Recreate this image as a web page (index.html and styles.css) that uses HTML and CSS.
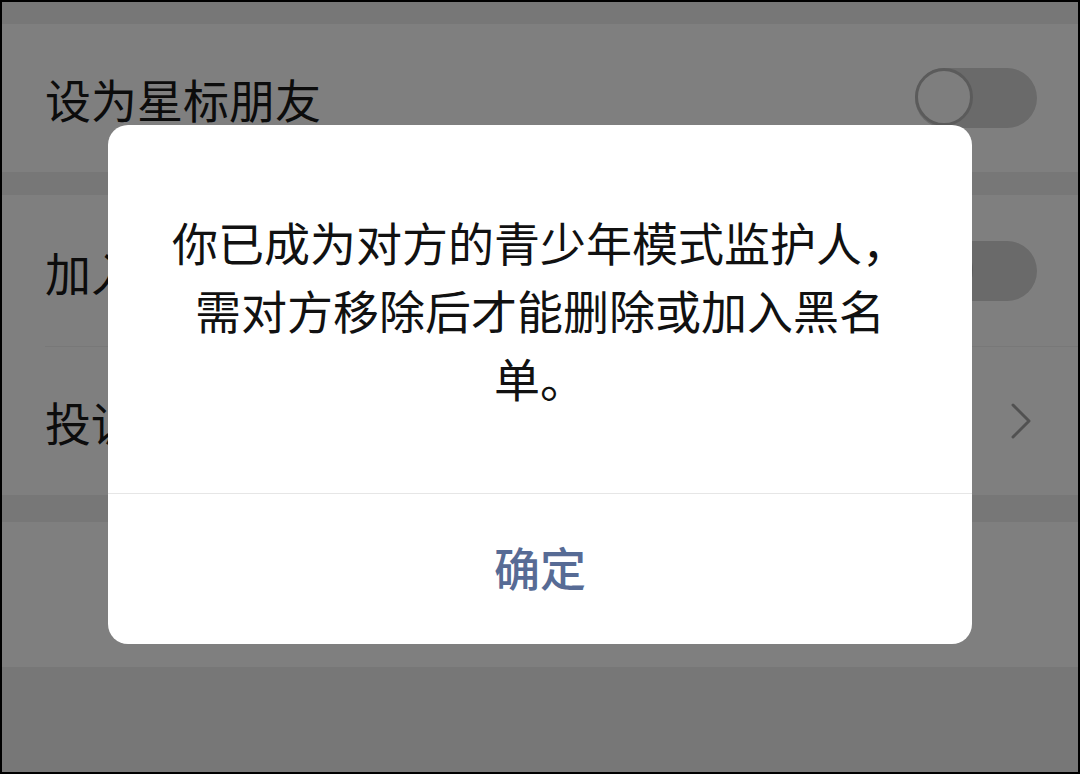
FILE: index.html
```html
<!DOCTYPE html>
<html>
	<head>
		<meta charset="utf-8">
		<title>资料设置</title>
		<link rel="stylesheet" href="styles.css">
	</head>
	<body>
		<div class="screen">
			<div class="gap gap-top"></div>
			<div class="cell">
				<span>设为星标朋友</span>
				<div class="switch"><i></i></div>
			</div>
			<div class="gap"></div>
			<div class="cell cell-tall line">
				<span>加入黑名单</span>
				<div class="switch"><i></i></div>
			</div>
			<div class="cell">
				<span>投诉</span>
				<svg class="arrow" width="22" height="38" viewBox="0 0 22 38">
					<polyline points="3,3 19,19 3,35" fill="none" stroke="#a2a2a2" stroke-width="3" stroke-linecap="round" stroke-linejoin="round"/>
				</svg>
			</div>
			<div class="gap gap-wide"></div>
			<div class="cell cell-btn">
				<span class="danger">删除</span>
			</div>

			<div class="mask">
				<div class="dialog">
					<p class="dialog-text">你已成为对方的青少年模式监护人，需对方移除后才能删除或加入黑名单。</p>
					<div class="dialog-btn">确定</div>
				</div>
			</div>
		</div>
	</body>
</html>
```

FILE: styles.css
```css
*{
	box-sizing: border-box;
}
body{
	margin: 0;
	font-family: "Noto Sans CJK SC", "Noto Sans", sans-serif;
}
.screen{
	width: 1080px;
	height: 774px;
	border: 2px solid #000;
	background: #eeeeee;
	position: relative;
	overflow: hidden;
}
.gap{
	height: 23px;
}
.gap-top{
	height: 22px;
}
.gap-wide{
	height: 27px;
}
.cell{
	height: 148px;
	background: #fff;
	display: flex;
	align-items: center;
	justify-content: space-between;
	padding: 0 41px 0 43px;
	font-size: 46px;
	color: #181818;
	position: relative;
}
.cell-tall{
	height: 152px;
}
.line:after{
	content: '';
	position: absolute;
	left: 43px;
	right: 0;
	bottom: 0;
	height: 1px;
	background: #f1f1f1;
}
.cell-btn{
	height: 145px;
	justify-content: center;
}
.danger{
	color: #fa5151;
}
.arrow{
	margin-right: 5px;
}
.switch{
	width: 122px;
	height: 60px;
	border-radius: 30px;
	background: #d4d4d4;
	padding: 1px;
}
.switch i{
	display: block;
	width: 58px;
	height: 58px;
	border-radius: 50%;
	background: #fcfcfc;
	border: 3px solid #b6b6b6;
	margin-top: -1px;
	margin-left: -1px;
}
.mask{
	position: absolute;
	left: 0;
	top: 0;
	right: 0;
	bottom: 0;
	background: rgba(0, 0, 0, 0.5);
	display: flex;
	align-items: center;
	justify-content: center;
	padding-bottom: 6px;
}
.dialog{
	width: 864px;
	background: #fff;
	border-radius: 20px;
	overflow: hidden;
}
.dialog-text{
	margin: 0;
	padding: 82px 60px 82px;
	font-size: 46px;
	line-height: 68px;
	color: #111;
	text-align: center;
}
.dialog-btn{
	height: 151px;
	border-top: 1px solid #e6e6e6;
	display: flex;
	align-items: center;
	justify-content: center;
	padding-bottom: 6px;
	font-size: 46px;
	font-weight: 500;
	color: #576b95;
}
```
